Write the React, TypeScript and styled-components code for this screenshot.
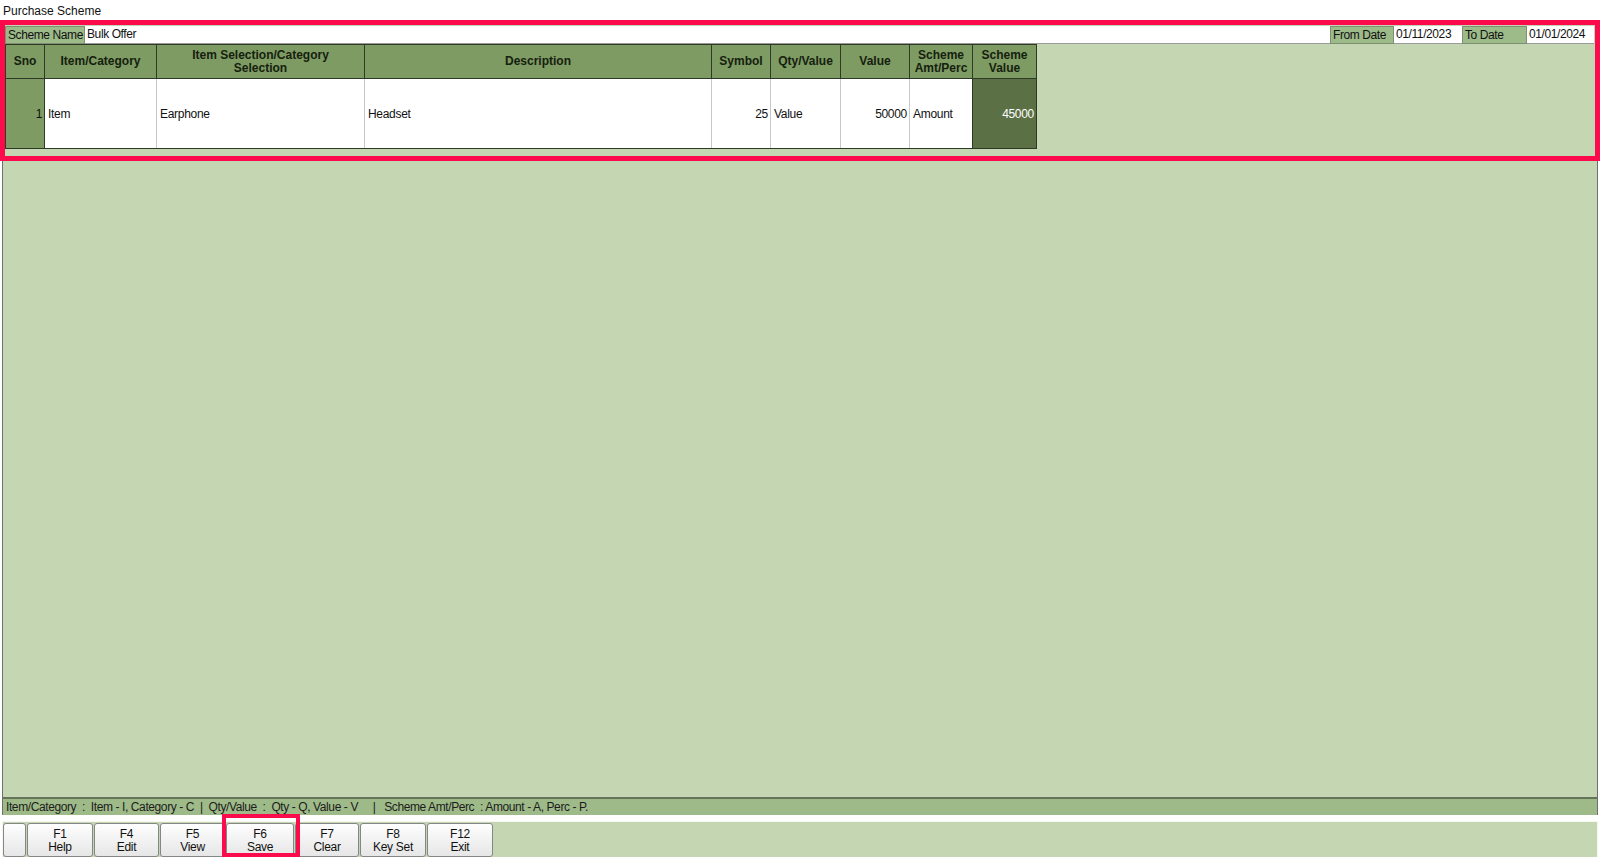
import React from "react";
import styled, { createGlobalStyle } from "styled-components";

const GlobalStyle = createGlobalStyle`
  html, body {
    margin: 0;
    padding: 0;
    background: #ffffff;
    font-family: "Liberation Sans", Arial, sans-serif;
    font-size: 12px;
    color: #111;
  }
`;

const Page = styled.div`
  position: relative;
  width: 1600px;
  height: 857px;
  display: flex;
  flex-direction: column;
  overflow: hidden;
`;

const TitleBar = styled.div`
  height: 20px;
  line-height: 22px;
  padding-left: 3px;
  font-size: 12px;
  color: #111;
`;

const Panel = styled.div`
  flex: 1;
  display: flex;
  flex-direction: column;
  margin: 0 2px 0 2px;
  background: #c4d7b2;
  border-left: 1px solid #6f6f6f;
  border-right: 1px solid #6f6f6f;
`;

const SchemeRow = styled.div`
  display: flex;
  height: 18px;
  margin: 6px 0 0 2px;
  padding-right: 3px;
  font-size: 12px;
  letter-spacing: -0.4px;
`;

const Label = styled.div<{ $w: number }>`
  width: ${(p) => p.$w}px;
  box-sizing: border-box;
  background: #9dba89;
  border: 1px solid #7f8f74;
  line-height: 16px;
  padding-left: 2px;
  white-space: nowrap;
  overflow: hidden;
`;

const Field = styled.div<{ $w?: number }>`
  ${(p) => (p.$w ? `width: ${p.$w}px;` : "flex: 1;")}
  box-sizing: border-box;
  background: #ffffff;
  border-bottom: 1px solid #9a9a9a;
  line-height: 17px;
  padding-left: 2px;
  white-space: nowrap;
`;

const cols = [40, 112, 208, 347, 59, 70, 69, 63, 64];

const Grid = styled.div`
  display: grid;
  grid-template-columns: ${cols.map((c) => c + "px").join(" ")};
  grid-template-rows: 34px 69px;
  margin-left: 2px;
  width: ${cols.reduce((a, b) => a + b, 0)}px;
  border-top: 1px solid #2e3a26;
  border-bottom: 1px solid #2e3a26;
  box-sizing: border-box;
`;

const Head = styled.div`
  background: #7d9b62;
  border-right: 1px solid #2e3a26;
  border-bottom: 1px solid #2e3a26;
  display: flex;
  align-items: center;
  justify-content: center;
  text-align: center;
  white-space: pre-line;
  font-weight: bold;
  font-size: 12px;
  line-height: 13px;
  color: #16200f;
  &:first-child {
    border-left: 1px solid #2e3a26;
  }
`;

const Cell = styled.div<{ $tone?: "sno" | "dark"; $right?: boolean }>`
  display: flex;
  align-items: center;
  justify-content: ${(p) => (p.$right ? "flex-end" : "flex-start")};
  padding: 0 2px 0 3px;
  font-size: 12px;
  letter-spacing: -0.3px;
  background: ${(p) =>
    p.$tone === "sno" ? "#7d9b62" : p.$tone === "dark" ? "#5b7044" : "#ffffff"};
  color: ${(p) => (p.$tone === "dark" ? "#ffffff" : "#111")};
  border-right: 1px solid
    ${(p) => (p.$tone ? "#2e3a26" : "#c8c8c8")};
  border-left: ${(p) => (p.$tone === "sno" ? "1px solid #2e3a26" : "none")};
  &:nth-last-child(2) {
    border-right: 1px solid #2e3a26;
  }
`;

const Spacer = styled.div`
  flex: 1;
`;

const Legend = styled.div`
  height: 16px;
  border-top: 2px solid #66745c;
  background: #9eba88;
  line-height: 16px;
  padding-left: 3px;
  font-size: 12px;
  white-space: pre;
  color: #1c1c1c;
  letter-spacing: -0.4px;
`;

const ButtonBar = styled.div`
  height: 36px;
  margin: 6px 2px 0 2px;
  box-sizing: border-box;
  background: #c4d7b2;
  border: 1px solid #f4f8ef;
  border-bottom: none;
  display: flex;
  gap: 1px;
  padding: 1px 0 0 0;
`;

const KeyButton = styled.button<{ $w: number }>`
  width: ${(p) => p.$w}px;
  height: 100%;
  box-sizing: border-box;
  background: linear-gradient(#fefefe, #e6e6e6);
  border: 1px solid #868686;
  border-radius: 3px;
  font-family: "Liberation Sans", Arial, sans-serif;
  font-size: 12px;
  line-height: 13px;
  color: #111;
  padding: 2px 0 0 0;
  display: flex;
  flex-direction: column;
  align-items: center;
  justify-content: center;
  letter-spacing: -0.3px;
`;

const Highlight = styled.div<{ $l: number; $t: number; $w: number; $h: number; $b: number }>`
  position: absolute;
  left: ${(p) => p.$l}px;
  top: ${(p) => p.$t}px;
  width: ${(p) => p.$w}px;
  height: ${(p) => p.$h}px;
  box-sizing: border-box;
  border: ${(p) => p.$b}px solid #fb0a4c;
  pointer-events: none;
`;

const headers = [
  "Sno",
  "Item/Category",
  "Item Selection/Category\nSelection",
  "Description",
  "Symbol",
  "Qty/Value",
  "Value",
  "Scheme\nAmt/Perc",
  "Scheme\nValue",
];

const keys = [
  { k: "", l: "", w: 23 },
  { k: "F1", l: "Help", w: 66 },
  { k: "F4", l: "Edit", w: 65 },
  { k: "F5", l: "View", w: 65 },
  { k: "F6", l: "Save", w: 68 },
  { k: "F7", l: "Clear", w: 64 },
  { k: "F8", l: "Key Set", w: 66 },
  { k: "F12", l: "Exit", w: 66 },
];

export default function App() {
  return (
    <Page>
      <GlobalStyle />
      <TitleBar>Purchase Scheme</TitleBar>
      <Panel>
        <SchemeRow>
          <Label $w={80}>Scheme Name</Label>
          <Field>Bulk Offer</Field>
          <Label $w={64}>From Date</Label>
          <Field $w={68}>01/11/2023</Field>
          <Label $w={65}>To Date</Label>
          <Field $w={67}>01/01/2024</Field>
        </SchemeRow>
        <Grid>
          {headers.map((h) => (
            <Head key={h}>{h}</Head>
          ))}
          <Cell $tone="sno" $right>1</Cell>
          <Cell>Item</Cell>
          <Cell>Earphone</Cell>
          <Cell>Headset</Cell>
          <Cell $right>25</Cell>
          <Cell>Value</Cell>
          <Cell $right>50000</Cell>
          <Cell>Amount</Cell>
          <Cell $tone="dark" $right>45000</Cell>
        </Grid>
        <Spacer />
        <Legend>
          {"Item/Category  :  Item - I, Category - C  |  Qty/Value  :  Qty - Q, Value - V     |   Scheme Amt/Perc  : Amount - A, Perc - P."}
        </Legend>
      </Panel>
      <ButtonBar>
        {keys.map((b, i) => (
          <KeyButton key={i} $w={b.w}>
            <span>{b.k}</span>
            <span>{b.l}</span>
          </KeyButton>
        ))}
      </ButtonBar>
      <Highlight $l={0} $t={20} $w={1600} $h={141} $b={5} />
      <Highlight $l={222} $t={814} $w={78} $h={43} $b={4} />
    </Page>
  );
}
